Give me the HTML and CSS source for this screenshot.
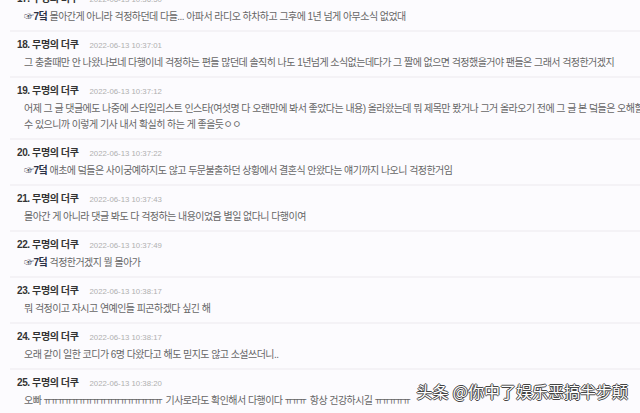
FILE: index.html
```html
<!DOCTYPE html>
<html lang="ko">
<head>
  <meta charset="UTF-8">
  <title>댓글</title>
  <link rel="stylesheet" href="styles.css">
</head>
<body>

  <div id="comments">
    <div class="comment">
      <div class="head"><span class="name">17. 무명의 더쿠</span><span class="date">2022-06-13 10:36:50</span></div>
      <div class="text"><b class="reply">☞7덬</b> 몰아간게 아니라 걱정하던데 다들... 아파서 라디오 하차하고 그후에 1년 넘게 아무소식 없었대</div>
    </div>
    <div class="comment">
      <div class="head"><span class="name">18. 무명의 더쿠</span><span class="date">2022-06-13 10:37:01</span></div>
      <div class="text">그 충출때만 안 나왔나보네 다행이네 걱정하는 편들 많던데 솔직히 나도 1년넘게 소식없는데다가 그 짤에 없으면 걱정했을거야 팬들은 그래서 걱정한거겠지</div>
    </div>
    <div class="comment">
      <div class="head"><span class="name">19. 무명의 더쿠</span><span class="date">2022-06-13 10:37:12</span></div>
      <div class="text">어제 그 글 댓글에도 나중에 스타일리스트 인스타(여섯명 다 오랜만에 봐서 좋았다는 내용) 올라왔는데 뭐 제목만 봤거나 그거 올라오기 전에 그 글 본 덬들은 오해할<br>수 있으니까 이렇게 기사 내서 확실히 하는 게 좋을듯ㅇㅇ</div>
    </div>
    <div class="comment">
      <div class="head"><span class="name">20. 무명의 더쿠</span><span class="date">2022-06-13 10:37:22</span></div>
      <div class="text"><b class="reply">☞7덬</b> 애초에 덬들은 사이궁예하지도 않고 두문불출하던 상황에서 결혼식 안왔다는 얘기까지 나오니 걱정한거임</div>
    </div>
    <div class="comment">
      <div class="head"><span class="name">21. 무명의 더쿠</span><span class="date">2022-06-13 10:37:43</span></div>
      <div class="text">몰아간 게 아니라 댓글 봐도 다 걱정하는 내용이었음 별일 없다니 다행이여</div>
    </div>
    <div class="comment">
      <div class="head"><span class="name">22. 무명의 더쿠</span><span class="date">2022-06-13 10:37:49</span></div>
      <div class="text"><b class="reply">☞7덬</b> 걱정한거겠지 뭘 몰아가</div>
    </div>
    <div class="comment">
      <div class="head"><span class="name">23. 무명의 더쿠</span><span class="date">2022-06-13 10:38:17</span></div>
      <div class="text">뭐 걱정이고 자시고 연예인들 피곤하겠다 싶긴 해</div>
    </div>
    <div class="comment">
      <div class="head"><span class="name">24. 무명의 더쿠</span><span class="date">2022-06-13 10:38:17</span></div>
      <div class="text">오래 같이 일한 코디가 6명 다왔다고 해도 믿지도 않고 소설쓰더니..</div>
    </div>
    <div class="comment">
      <div class="head"><span class="name">25. 무명의 더쿠</span><span class="date">2022-06-13 10:38:20</span></div>
      <div class="text">오빠 <span class="cry">ㅠㅠㅠㅠㅠㅠㅠㅠㅠㅠㅠㅠㅠㅠㅠㅠㅠ</span> 기사로라도 확인해서 다행이다 <span class="cry">ㅠㅠㅠ</span> 항상 건강하시길 <span class="cry">ㅠㅠㅠㅠㅠ</span></div>
    </div>
  </div>

  <div id="watermark">头条 @你中了娱乐恶搞半步颠</div>

</body>
</html>
```

FILE: styles.css
```css
body {
  margin: 0;
  background-color: #fcfbfe;
  font-family: 'Liberation Sans', 'Noto Sans CJK KR', sans-serif;
  color: #666;
  overflow: hidden;
  height: 413px;
  position: relative;
}

#comments {
  margin-top: -14px;
}

.comment {
  margin-left: 10px;
  padding: 6px 0 5px;
  border-bottom: 2px solid #f4f2f6;
}

.head {
  height: 14px;
  line-height: 14px;
  padding-left: 7px;
  display: flex;
  align-items: baseline;
  white-space: nowrap;
}

.name {
  font-size: 10px;
  font-weight: bold;
  color: #333;
  letter-spacing: -0.4px;
}

.date {
  margin-left: 11px;
  font-size: 7.8px;
  color: #b0b0b0;
}

.text {
  margin-top: 3px;
  padding-left: 14px;
  font-size: 10px;
  line-height: 16px;
  letter-spacing: -0.55px;
  white-space: nowrap;
}

.reply {
  color: #2b3246;
  letter-spacing: -0.5px;
}

.cry {
  letter-spacing: -1.35px;
  font-size: 9px;
  margin-right: 2px;
}

#watermark {
  position: absolute;
  right: 12px;
  bottom: 10px;
  font-family: 'Noto Sans CJK SC', sans-serif;
  font-size: 16px;
  color: #fff;
  text-shadow: 1px 0 #444, -1px 0 #444, 0 1px #444, 0 -1px #444;
}
```
